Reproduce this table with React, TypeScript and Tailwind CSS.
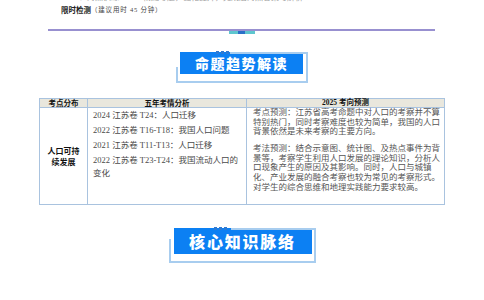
import React from "react";

// 讲义页：限时检测 / 命题趋势解读（表格）/ 核心知识脉络
const FONT = { fontFamily: '"Liberation Serif", "Noto Sans CJK SC", serif' };
const SANS = { fontFamily: '"Noto Sans CJK SC", sans-serif' };

const EXAMS = [
  ["2024 江苏卷 T24：人口迁移"],
  ["2022 江苏卷 T16-T18：我国人口问题"],
  ["2021 江苏卷 T11-T13：人口迁移"],
  ["2022 江苏卷 T23-T24：我国流动人口的", "变化"],
];

const PREDICT = [
  [
    "考点预测：江苏省高考命题中对人口的考察并不算",
    "特别热门，同时考察难度也较为简单，我国的人口",
    "背景依然是未来考察的主要方向。",
  ],
  [
    "考法预测：结合示意图、统计图、及热点事件为背",
    "景等，考察学生利用人口发展的理论知识，分析人",
    "口现象产生的原因及其影响。同时，人口与城镇",
    "化、产业发展的融合考察也较为常见的考察形式。",
    "对学生的综合思维和地理实践能力要求较高。",
  ],
];

type HeadingProps = {
  title: string;
  frame: string; // 外框尺寸
  box: string; // 蓝色标题块尺寸与内边距
  text: string;
  dotsLeft: string;
  lineLeft: string;
  sideTop: string;
};

function Heading({ title, frame, box, text, dotsLeft, lineLeft, sideTop }: HeadingProps) {
  return (
    <div className={`relative mx-auto border-r-2 border-b-2 border-[#a8cdef] ${frame}`}>
      {/* 断开的上边框与左边框 */}
      <div className={`absolute right-[-2px] top-0 h-[2px] bg-[#a8cdef] ${lineLeft}`} />
      <div className={`absolute left-0 bottom-[-2px] w-[2px] bg-[#a8cdef] ${sideTop}`} />
      <div className={`absolute top-[-1px] flex gap-[2px] ${dotsLeft}`}>
        <span className="h-[3px] w-[3px] bg-[#2f7ad2]" />
        <span className="h-[3px] w-[3px] bg-[#2f7ad2]" />
        <span className="h-[3px] w-[3px] bg-[#2f7ad2]" />
      </div>
      <div
        className={`flex items-center justify-center bg-[#0c80f3] font-black text-white ${box} ${text}`}
        style={SANS}
      >
        {title}
      </div>
    </div>
  );
}

export default function App() {
  return (
    <div className="h-[300px] w-[484px] overflow-hidden bg-white" style={FONT}>
      {/* 上一行被裁掉的文字 */}
      <div className="h-[3px] overflow-hidden pl-[75px]">
        <div className="-mt-[6px] text-[8px] leading-[8px] text-[#9a9a9a]">
          2．对点训练　　　精选考题，强化提升，完成后对照答案与解析
        </div>
      </div>

      <div className="mt-[2px] flex h-[10px] items-center pl-[61px] leading-[10px]">
        <span className="text-[7.5px] font-bold text-[#222]" style={SANS}>
          限时检测
        </span>
        <span className="text-[6.5px] tracking-[0.8px] text-[#444]">（建议用时 45 分钟）</span>
      </div>

      {/* 分隔线 */}
      <div className="ml-[48px] mt-[14px] w-[387px]">
        <div className="h-[2px] bg-[#9890d0]" />
        <div className="flex justify-center">
          <div className="flex h-[3px] w-[26px] justify-center bg-[#5ec6cf]">
            <div className="h-[3px] w-[7px] bg-[#2b6fc8]" />
          </div>
        </div>
      </div>

      <div className="mt-[18px]">
        <Heading
          title="命题趋势解读"
          frame="h-[31px] w-[132px]"
          box="ml-[4px] mt-[5px] h-[22px] w-[123px]"
          text="text-[14px] tracking-[1.5px]"
          dotsLeft="left-[40px]"
          lineLeft="left-[54px]"
          sideTop="top-[15px]"
        />
      </div>

      {/* 表格 */}
      <table className="ml-[39px] mt-[15px] w-[405px] table-fixed border-collapse text-[#4a4a4a]">
        <colgroup>
          <col className="w-[48px]" />
          <col className="w-[159px]" />
          <col className="w-[198px]" />
        </colgroup>
        <thead>
          <tr className="h-[9px] bg-[#e9e7dd]">
            <th className="border border-[#a9c3df] p-0 text-[7.5px] leading-[8px] font-bold text-[#111]" style={SANS}>
              考点分布
            </th>
            <th className="border border-[#a9c3df] p-0 text-[7.5px] leading-[8px] font-bold text-[#111]" style={SANS}>
              五年考情分析
            </th>
            <th className="border border-[#a9c3df] p-0 text-[7.5px] leading-[8px] font-bold text-[#111]">
              2025 考向预测
            </th>
          </tr>
        </thead>
        <tbody>
          <tr className="h-[97px]">
            <td className="border border-[#a9c3df] p-0 text-center align-middle">
              <div className="text-[8px] leading-[11px] font-bold text-[#111]" style={SANS}>
                人口可持
                <br />
                续发展
              </div>
            </td>
            <td className="border border-[#a9c3df] px-[5px] pt-[1px] align-top">
              {EXAMS.map((lines, i) => (
                <div key={i} className={i ? "mt-[2px]" : ""}>
                  {lines.map((l) => (
                    <div key={l} className="whitespace-nowrap text-[8.5px] leading-[13px]">
                      {l}
                    </div>
                  ))}
                </div>
              ))}
            </td>
            <td className="border border-[#a9c3df] pl-[6px] pt-0 align-top">
              {PREDICT.map((lines, i) => (
                <div key={i} className={i ? "mt-[6.7px]" : ""}>
                  {lines.map((l) => (
                    <div key={l} className="whitespace-nowrap text-[8.5px] leading-[9.7px] text-[#555]">
                      {l}
                    </div>
                  ))}
                </div>
              ))}
            </td>
          </tr>
        </tbody>
      </table>

      <div className="mt-[23px]">
        <Heading
          title="核心知识脉络"
          frame="h-[35px] w-[147px]"
          box="ml-[5px] mt-[5px] h-[26px] w-[138px]"
          text="text-[16px] tracking-[1.8px]"
          dotsLeft="left-[45px]"
          lineLeft="left-[62px]"
          sideTop="top-[11px]"
        />
      </div>
    </div>
  );
}
